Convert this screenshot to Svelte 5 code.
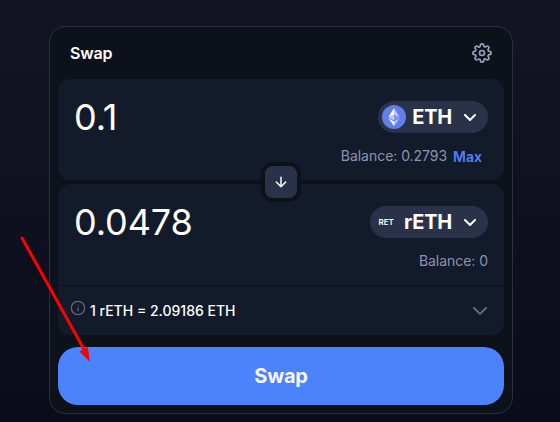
<script lang="ts">
  let sellAmount = "0.1"
  let buyAmount = "0.0478"
  let rate = "1 rETH = 2.09186 ETH"
</script>

<main>
  <section class="card">
    <header>
      <h1>Swap</h1>
      <button class="icon-btn" aria-label="Settings">
        <svg width="20" height="20" viewBox="0 0 24 24" fill="none" stroke="currentColor" stroke-width="2" stroke-linecap="round" stroke-linejoin="round">
          <circle cx="12" cy="12" r="3" />
          <path d="M19.4 15a1.65 1.65 0 0 0 .33 1.82l.06.06a2 2 0 0 1 0 2.83 2 2 0 0 1-2.83 0l-.06-.06a1.65 1.65 0 0 0-1.82-.33 1.65 1.65 0 0 0-1 1.51V21a2 2 0 0 1-2 2 2 2 0 0 1-2-2v-.09A1.65 1.65 0 0 0 9 19.4a1.65 1.65 0 0 0-1.82.33l-.06.06a2 2 0 0 1-2.83 0 2 2 0 0 1 0-2.83l.06-.06a1.65 1.65 0 0 0 .33-1.82 1.65 1.65 0 0 0-1.51-1H3a2 2 0 0 1-2-2 2 2 0 0 1 2-2h.09A1.65 1.65 0 0 0 4.6 9a1.65 1.65 0 0 0-.33-1.82l-.06-.06a2 2 0 0 1 0-2.83 2 2 0 0 1 2.83 0l.06.06a1.65 1.65 0 0 0 1.82.33H9a1.65 1.65 0 0 0 1-1.51V3a2 2 0 0 1 2-2 2 2 0 0 1 2 2v.09a1.65 1.65 0 0 0 1 1.51 1.65 1.65 0 0 0 1.82-.33l.06-.06a2 2 0 0 1 2.83 0 2 2 0 0 1 0 2.83l-.06.06a1.65 1.65 0 0 0-.33 1.82V9a1.65 1.65 0 0 0 1.51 1H21a2 2 0 0 1 2 2 2 2 0 0 1-2 2h-.09a1.65 1.65 0 0 0-1.51 1z" />
        </svg>
      </button>
    </header>

    <div class="panel sell">
      <div class="row">
        <span class="amount">{sellAmount}</span>
        <button class="token">
          <svg class="eth" width="24" height="24" viewBox="0 0 24 24">
            <circle cx="12" cy="12" r="12" fill="#627eea" />
            <path d="M12 3v6.7l5.6 2.5z" fill="#c0cbf7" />
            <path d="M12 3 6.4 12.2 12 9.7z" fill="#fff" />
            <path d="M12 16.5V21l5.6-7.8z" fill="#c0cbf7" />
            <path d="M12 21v-4.5l-5.6-3.3z" fill="#fff" />
            <path d="m12 15.4 5.6-3.2L12 9.7z" fill="#8197ee" />
            <path d="m6.4 12.2 5.6 3.2V9.7z" fill="#c0cbf7" />
          </svg>
          <span class="symbol">ETH</span>
          <svg class="chevron" width="12" height="7" viewBox="0 0 12 7" fill="none" stroke="currentColor" stroke-width="2" stroke-linecap="round" stroke-linejoin="round">
            <path d="m1 1 5 5 5-5" />
          </svg>
        </button>
      </div>
      <div class="balance">Balance: 0.2793 <button class="max">Max</button></div>
    </div>

    <div class="switch">
      <button aria-label="Switch tokens">
        <svg width="16" height="16" viewBox="0 0 24 24" fill="none" stroke="currentColor" stroke-width="2.2" stroke-linecap="round" stroke-linejoin="round">
          <path d="M12 5v14M19 12l-7 7-7-7" />
        </svg>
      </button>
    </div>

    <div class="panel buy">
      <div class="row">
        <span class="amount">{buyAmount}</span>
        <button class="token">
          <span class="logo">RET</span>
          <span class="symbol">rETH</span>
          <svg class="chevron" width="12" height="7" viewBox="0 0 12 7" fill="none" stroke="currentColor" stroke-width="2" stroke-linecap="round" stroke-linejoin="round">
            <path d="m1 1 5 5 5-5" />
          </svg>
        </button>
      </div>
      <div class="balance last">Balance: 0</div>
    </div>

    <div class="details">
      <svg class="info" width="16" height="16" viewBox="0 0 24 24" fill="none" stroke="currentColor" stroke-width="2" stroke-linecap="round" stroke-linejoin="round">
        <circle cx="12" cy="12" r="10" />
        <path d="M12 16v-4M12 8h.01" />
      </svg>
      <span>{rate}</span>
      <svg class="expand" width="16" height="10" viewBox="0 0 16 10" fill="none" stroke="currentColor" stroke-width="2" stroke-linecap="round" stroke-linejoin="round">
        <path d="m2 2 6 6 6-6" />
      </svg>
    </div>

    <button class="submit">Swap</button>
  </section>

  <svg class="pointer" width="80" height="130" viewBox="0 0 80 130">
    <path d="M2 2 65 115" stroke="#fe0000" stroke-width="3" stroke-linecap="round" />
    <path d="m70 126-10.5-10.5 8.2-4.7z" fill="#fe0000" />
  </svg>
</main>

<style>
  :global(body) {
    margin: 0;
  }

  main {
    position: relative;
    box-sizing: border-box;
    height: 422px;
    padding: 26px 47px 0 49px;
    overflow: hidden;
    background: linear-gradient(#131524, #0b0c1a);
    color: #fff;
    font-family: Inter, sans-serif;
  }

  button {
    border: 0;
    padding: 0;
    font-family: inherit;
    color: inherit;
    background: none;
  }

  svg {
    display: block;
    flex-shrink: 0;
  }

  .card {
    box-sizing: border-box;
    height: 388px;
    padding: 0 8px;
    border: 1px solid #2b2f3f;
    border-radius: 16px;
    background: #0d111a;
  }

  header {
    display: flex;
    align-items: center;
    justify-content: space-between;
    height: 52px;
    padding: 0 12px;
  }

  h1 {
    margin: 0;
    font-size: 16px;
    font-weight: 600;
    letter-spacing: -0.15px;
  }

  .icon-btn {
    color: #98a1c0;
  }

  .panel {
    box-sizing: border-box;
    height: 101px;
    padding: 16px;
    background: #131a2a;
  }

  .sell {
    border-radius: 12px;
  }

  .buy {
    border-radius: 12px 12px 0 0;
  }

  .row {
    display: flex;
    align-items: center;
    justify-content: space-between;
    height: 44px;
  }

  .amount {
    font-size: 36px;
    line-height: 44px;
    letter-spacing: -0.1px;
  }

  .token {
    display: flex;
    align-items: center;
    height: 32px;
    padding: 0 12px 0 4px;
    border-radius: 16px;
    background: #293249;
  }

  .symbol {
    margin-left: 6px;
    font-size: 20px;
    font-weight: 700;
    line-height: 24px;
    letter-spacing: -0.25px;
  }

  .logo {
    width: 24px;
    text-align: center;
    font-size: 8px;
    font-weight: 600;
  }

  .chevron {
    margin-left: 12px;
  }

  .balance {
    display: flex;
    justify-content: flex-end;
    gap: 6px;
    padding: 8px 6px 0 0;
    font-size: 14px;
    line-height: 18px;
    letter-spacing: -0.04px;
    color: #8c94b2;
  }

  .last {
    padding-right: 0;
  }

  .max {
    font-size: 14px;
    font-weight: 600;
    color: #4c82fb;
  }

  .switch {
    position: relative;
    display: flex;
    justify-content: center;
    height: 40px;
    margin: -18px 0;
  }

  .switch button {
    box-sizing: border-box;
    display: flex;
    align-items: center;
    justify-content: center;
    width: 40px;
    height: 40px;
    border: 4px solid #0d111a;
    border-radius: 12px;
    background: #293249;
  }

  .details {
    box-sizing: border-box;
    display: flex;
    align-items: center;
    height: 50px;
    padding: 0 16px 0 12px;
    border-top: 1px solid #0d111a;
    border-radius: 0 0 12px 12px;
    background: #131a2a;
    font-size: 14px;
    font-weight: 500;
  }

  .info {
    margin: -6px 4px 0 0;
    color: #5d6785;
  }

  .expand {
    margin-left: auto;
    color: #5d6785;
  }

  .submit {
    display: block;
    width: 100%;
    height: 58px;
    margin-top: 12px;
    border-radius: 20px;
    background: #4c82fb;
    color: #f5f6fc;
    font-size: 20px;
    font-weight: 700;
    letter-spacing: -0.25px;
  }

  .pointer {
    position: absolute;
    left: 20px;
    top: 236px;
  }
</style>
